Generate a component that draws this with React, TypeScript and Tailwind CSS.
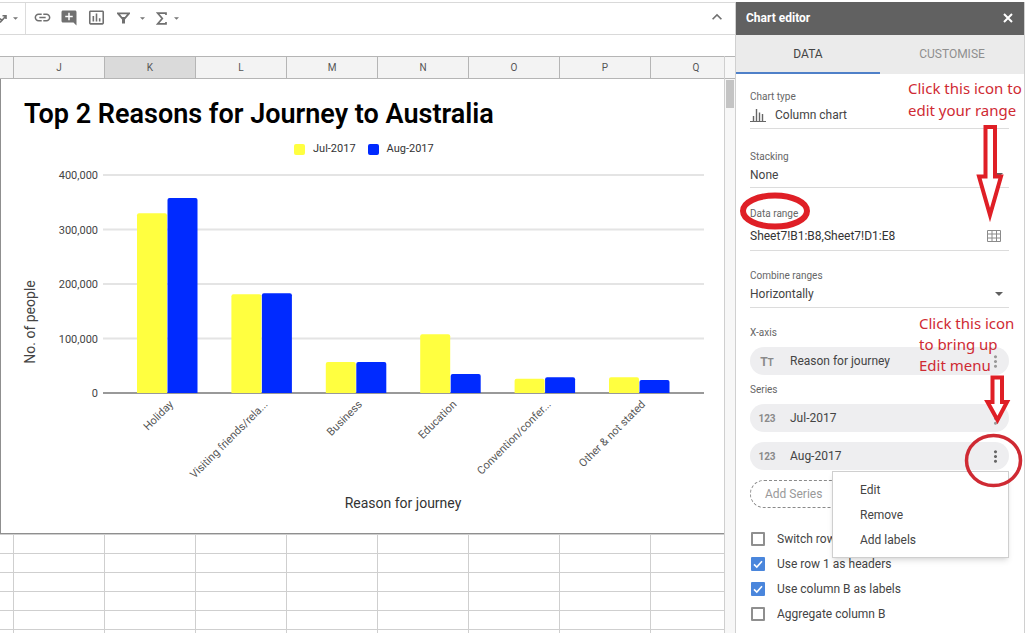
import { useId, useState } from "react";
import type { ReactNode } from "react";
import {
  MdAddComment,
  MdInsertChartOutlined,
  MdKeyboardArrowUp,
  MdLink,
  MdMoreVert,
} from "react-icons/md";

const columns = ["J", "K", "L", "M", "N", "O", "P", "Q"];
const rows = Array.from({ length: 30 }, (_, i) => i);

const data = [
  { name: "Holiday", jul: 330000, aug: 358000 },
  { name: "Visiting friends/rela...", jul: 181000, aug: 183000 },
  { name: "Business", jul: 57000, aug: 57000 },
  { name: "Education", jul: 108000, aug: 35000 },
  { name: "Convention/confer...", jul: 26000, aug: 29000 },
  { name: "Other & not stated", jul: 29000, aug: 24000 },
];

const ticks = [400000, 300000, 200000, 100000, 0];
const BASE = 314;
const scale = (v: number) => (v / 400000) * 218;

function barPath(x: number, value: number) {
  const top = BASE - scale(value);
  return `M${x} ${BASE}V${top + 2}q0 -2 2 -2h26q2 0 2 2V${BASE}z`;
}

function Caret() {
  return (
    <svg viewBox="0 0 8 4" className="h-1 w-2 shrink-0 fill-[#5f5f5f]" aria-hidden="true">
      <path d="M0 0h8L4 4z" />
    </svg>
  );
}

function SmallCaret() {
  return (
    <svg viewBox="0 0 6 3" className="h-[3px] w-[5px] fill-[#777]" aria-hidden="true">
      <path d="M0 0h6L3 3z" />
    </svg>
  );
}

function Toolbar() {
  return (
    <div className="flex h-[33px] items-center border-y border-[#d9d9d9] pr-2 text-[#707070]">
      <button type="button" aria-label="Paint" className="flex h-full items-center gap-1.5 pr-[7px]">
        <svg viewBox="0 0 7 12" className="h-3 w-[7px]" fill="none" stroke="currentColor" strokeWidth="1.6">
          <path d="M0 9.500L5.500 3.500M0 5.500L2.500 8M2.500 2.800H6V6" />
        </svg>
        <SmallCaret />
      </button>
      <span className="h-full w-px bg-[#dcdcdc]" />
      <button type="button" aria-label="Insert link" className="ml-[7px] w-[27px] pb-0.5">
        <MdLink size={19} />
      </button>
      <button type="button" aria-label="Insert comment" className="w-[27px] pb-0.5">
        <MdAddComment size={18} />
      </button>
      <button type="button" aria-label="Insert chart" className="w-[27px] pb-0.5">
        <MdInsertChartOutlined size={19} />
      </button>
      <button type="button" aria-label="Filter" className="flex w-10 items-center gap-2.5 pb-px pl-[3px]">
        <svg viewBox="0 0 13 12" className="h-3 w-[13px]" aria-hidden="true">
          <path
            fill="currentColor"
            fillRule="evenodd"
            d="M0 0.500h13v1.300L8 7.500V11.500H5V7.500L0 1.800zM3 2.200L5.200 5h2.600L10 2.200z"
          />
        </svg>
        <SmallCaret />
      </button>
      <button type="button" aria-label="Functions" className="flex items-center gap-[7px] pb-px pl-0.5">
        <svg viewBox="0 0 11 13" className="h-[13px] w-[11px]" fill="none" stroke="currentColor" strokeWidth="1.7" aria-hidden="true">
          <path d="M10 3V1.200H1.800L6.300 6.500L1.800 11.800H10V10" />
        </svg>
        <SmallCaret />
      </button>
      <button type="button" aria-label="Hide menus" className="ml-auto pb-1">
        <MdKeyboardArrowUp size={20} />
      </button>
    </div>
  );
}

function Chart() {
  return (
    <figure className="absolute inset-x-0 top-[23px] h-[455px] border-b border-l border-[#8f8f8f] bg-white pt-[19px]">
      <h1 className="pl-[23px] text-[27px] leading-8 font-semibold text-black">
        Top 2 Reasons for Journey to Australia
      </h1>
      <ul className="flex gap-3 pt-[11px] pl-[293px] text-[11px] leading-4 text-[#333]">
        <li className="flex items-center gap-2">
          <span className="size-[11px] rounded-[2px] bg-[#ffff40]" />
          Jul-2017
        </li>
        <li className="flex items-center gap-2">
          <span className="size-[11px] rounded-[2px] bg-[#002aff]" />
          Aug-2017
        </li>
      </ul>
      <svg
        viewBox="0 80 723 374"
        className="absolute top-20 left-0 h-[374px] w-[723px] font-[Roboto,sans-serif]"
        role="img"
        aria-label="Column chart"
      >
        {ticks.map((t) => (
          <g key={t}>
            <path
              d={`M102 ${BASE - scale(t)}H703`}
              stroke={t === 0 ? "#777" : "#e4e4e4"}
              strokeWidth={t === 0 ? 1.5 : 2}
            />
            <text x="97" y={BASE - scale(t) + 4} textAnchor="end" fontSize="11" fill="#444">
              {t.toLocaleString("en-US")}
            </text>
          </g>
        ))}
        {data.map((d, i) => {
          const x = 136 + i * 94.4;
          return (
            <g key={d.name}>
              <path d={barPath(x, d.jul)} fill="#ffff40" />
              <path d={barPath(x + 30.5, d.aug)} fill="#002aff" />
              <text
                transform={`translate(${x + 37} ${BASE + 12}) rotate(-45)`}
                textAnchor="end"
                fontSize="11"
                fill="#555"
              >
                {d.name}
              </text>
            </g>
          );
        })}
        <text transform="translate(34 243) rotate(-90)" textAnchor="middle" fontSize="14" fill="#444">
          No. of people
        </text>
        <text x="402" y="429" textAnchor="middle" fontSize="14" fill="#333">
          Reason for journey
        </text>
      </svg>
    </figure>
  );
}

function Sheet() {
  return (
    <div className="flex min-h-0 flex-1">
      <div className="relative min-w-0 flex-1 overflow-hidden">
        <table className="w-[742px] table-fixed border-separate border-spacing-0">
          <colgroup>
            <col className="w-[14px]" />
            {columns.map((c) => (
              <col key={c} className="w-[91px]" />
            ))}
          </colgroup>
          <thead>
            <tr>
              <td className="h-[23px] border-y border-r border-[#b5b5b5] bg-[#f3f3f3] p-0" />
              {columns.map((c) => (
                <th
                  key={c}
                  scope="col"
                  className={`h-[23px] border-y border-r border-[#b5b5b5] p-0 text-[10px] leading-4 font-normal text-[#555] ${
                    c === "K" ? "bg-[#dadada]" : "bg-[#f3f3f3]"
                  }`}
                >
                  {c}
                </th>
              ))}
            </tr>
          </thead>
          <tbody>
            {rows.map((r) => (
              <tr key={r}>
                <td className="h-[19px] border-r border-b border-[#cfcfcf] p-0" />
                {columns.map((c) => (
                  <td key={c} className="h-[19px] border-r border-b border-[#cfcfcf] p-0" />
                ))}
              </tr>
            ))}
          </tbody>
        </table>
        <Chart />
      </div>
      <div className="flex w-[11px] flex-col border-l border-[#cfcfcf] bg-[#f7f7f7]">
        <div className="h-[23px] border-y border-[#b5b5b5]" />
        <div className="mx-px mt-px h-7 bg-[#c4c4c4]" />
      </div>
    </div>
  );
}

function SelectField({
  label,
  value,
  height,
  icon,
}: {
  label: string;
  value: string;
  height: string;
  icon?: ReactNode;
}) {
  const id = useId();
  return (
    <div className="border-b border-[#dcdcdc]">
      <label htmlFor={id} className="block text-[10px] leading-4 text-[#666]">
        {label}
      </label>
      <div className={`flex items-center pr-1.5 ${height}`}>
        {icon}
        <select id={id} className="min-w-0 flex-1 appearance-none bg-transparent text-[12px] leading-4 text-[#444]">
          <option>{value}</option>
        </select>
        <Caret />
      </div>
    </div>
  );
}

function Pill({
  icon,
  label,
  strong,
  children,
}: {
  icon: ReactNode;
  label: string;
  strong?: boolean;
  children?: ReactNode;
}) {
  return (
    <div className="relative flex h-7 items-center rounded-full bg-[#eeeef0] pr-1 pl-2">
      <span className="mr-3.5 w-[18px] pt-0.5 text-center text-[10px] leading-3 font-bold text-[#8a8a8a]">{icon}</span>
      <span className="flex-1 text-[12px] leading-4 text-[#444]">{label}</span>
      <button type="button" aria-label={`${label} options`} className={strong ? "text-[#666]" : "text-[#999]"}>
        <MdMoreVert size={19} />
      </button>
      {children}
    </div>
  );
}

function Check({ label, initial }: { label: string; initial: boolean }) {
  const [on, setOn] = useState(initial);
  return (
    <label className="flex h-[25px] items-center gap-3 pl-px text-[12px] leading-4 text-[#444]">
      <span className="relative flex size-3.5">
        <input
          type="checkbox"
          checked={on}
          onChange={() => setOn(!on)}
          className="size-3.5 appearance-none rounded-[1px] border-2 border-[#8f8f8f] bg-white checked:border-[#4a86dc] checked:bg-[#4a86dc]"
        />
        {on && (
          <svg viewBox="0 0 14 14" className="pointer-events-none absolute inset-0" fill="none" stroke="#fff" strokeWidth="1.6">
            <path d="M3 7.300L5.800 10L11 4.200" />
          </svg>
        )}
      </span>
      {label}
    </label>
  );
}

function Annotations() {
  return (
    <div className="pointer-events-none absolute inset-0 z-20 font-['Noto_Sans',sans-serif] text-[15px] text-[#cf2a33]">
      <p className="absolute top-[75px] right-0 w-[116px] bg-white leading-[22px] whitespace-nowrap">
        Click this icon to
        <br />
        edit your range
      </p>
      <p className="absolute top-[311px] right-0 w-[105px] leading-[21px] whitespace-nowrap">
        Click this icon
        <br />
        to bring up
        <br />
        Edit menu
      </p>
      <svg viewBox="0 0 288 500" className="absolute top-0 right-0 h-[500px] w-72" fill="none" stroke="#df1f26">
        <ellipse cx="39" cy="209" rx="32" ry="15.500" strokeWidth="6" />
        <ellipse cx="257.500" cy="458.500" rx="27" ry="25" strokeWidth="3.500" stroke="#cf2a33" />
        <path d="M249.500 125h9.500v49.500h6L254 213L243 174.500h6.500z" strokeWidth="4" fill="#fff" />
        <path d="M256.500 375.500h9.500v24.500h5L261.500 418L251.500 400h5z" strokeWidth="4" fill="#fff" />
      </svg>
    </div>
  );
}

function ChartEditor() {
  const rangeId = useId();
  return (
    <aside className="relative mr-1 w-[290px] shrink-0 border-x border-[#d0d0d0] bg-white">
      <header className="flex h-[33px] items-center justify-between bg-[#616161] pr-[11px] pb-0.5 pl-2.5 text-white">
        <h2 className="text-[12px] leading-4 font-bold">Chart editor</h2>
        <button type="button" aria-label="Close">
          <svg viewBox="0 0 10 10" className="size-2.5" fill="none" stroke="currentColor" strokeWidth="2" aria-hidden="true">
            <path d="M1 1L9 9M9 1L1 9" />
          </svg>
        </button>
      </header>
      <div role="tablist" className="flex h-[39px] bg-[#ebebeb] text-[12px]">
        <button type="button" role="tab" aria-selected="true" className="flex-1 border-b-2 border-[#4f80c8] text-[#444]">
          DATA
        </button>
        <button type="button" role="tab" aria-selected="false" className="flex-1 border-b-2 border-transparent text-[#8f8f8f]">
          CUSTOMISE
        </button>
      </div>
      <div className="pt-[15px] pr-[15px] pl-3.5">
        <div className="flex flex-col gap-5">
          <SelectField
            label="Chart type"
            value="Column chart"
            height="h-[23px] pb-[3px]"
            icon={
              <svg viewBox="0 0 16 14" className="mr-[9px] h-3.5 w-4" stroke="#666" fill="none" aria-hidden="true">
                <path d="M0 13.500H16" />
                <path d="M3.500 8V13M6.500 1V13M9.500 4.500V13M12.500 6V13" strokeWidth="1.400" />
              </svg>
            }
          />
          <SelectField label="Stacking" value="None" height="h-[22px] pb-[3px]" />
        </div>
        <div className="mt-[18px] flex flex-col gap-[17px]">
          <div className="border-b border-[#dcdcdc]">
            <label htmlFor={rangeId} className="block text-[10px] leading-4 text-[#666]">
              Data range
            </label>
            <div className="flex h-7 items-center pr-2">
              <input
                id={rangeId}
                defaultValue="Sheet7!B1:B8,Sheet7!D1:E8"
                className="min-w-0 flex-1 text-[12px] leading-4 text-[#333]"
              />
              <button type="button" aria-label="Select data range">
                <svg viewBox="0 0 14 12" className="h-3 w-3.5" fill="none" stroke="#8a8a8a" aria-hidden="true">
                  <path d="M0.500 0.500h13v11H0.500zM0 4h14M0 8h14M5 0v12M9.500 0v12" />
                </svg>
              </button>
            </div>
          </div>
          <SelectField label="Combine ranges" value="Horizontally" height="h-[23px] pb-[3px]" />
        </div>
        <h3 className="mt-[17px] mb-1.5 text-[10px] leading-4 text-[#666]">X-axis</h3>
        <Pill
          icon={
            <>
              <span className="text-[12px]">T</span>T
            </>
          }
          label="Reason for journey"
        />
        <h3 className="mt-[7px] mb-1.5 text-[10px] leading-4 text-[#666]">Series</h3>
        <div className="flex flex-col gap-2.5">
          <Pill icon="123" label="Jul-2017" />
          <Pill icon="123" label="Aug-2017" strong>
            <ul
              role="menu"
              className="absolute top-full right-0 z-10 mt-px w-[177px] border border-[#cfcfcf] bg-white py-[5px] shadow-md"
            >
              {["Edit", "Remove", "Add labels"].map((item) => (
                <li key={item} role="none">
                  <button
                    type="button"
                    role="menuitem"
                    className="flex h-[25px] w-full items-center pl-[27px] text-[12px] text-[#444]"
                  >
                    {item}
                  </button>
                </li>
              ))}
            </ul>
          </Pill>
          <button
            type="button"
            className="h-7 rounded-full border border-dashed border-[#8a8a8a] pl-3.5 text-left text-[12px] text-[#999]"
          >
            Add Series
          </button>
        </div>
        <div className="mt-[18px]">
          <Check label="Switch rows" initial={false} />
          <Check label="Use row 1 as headers" initial />
          <Check label="Use column B as labels" initial />
          <Check label="Aggregate column B" initial={false} />
        </div>
      </div>
      <Annotations />
    </aside>
  );
}

export default function App() {
  return (
    <div className="flex h-screen overflow-hidden bg-white pt-0.5 font-[Roboto,sans-serif]">
      <main className="flex min-w-0 flex-1 flex-col">
        <Toolbar />
        <div className="h-[21px] shrink-0" />
        <Sheet />
      </main>
      <ChartEditor />
    </div>
  );
}
